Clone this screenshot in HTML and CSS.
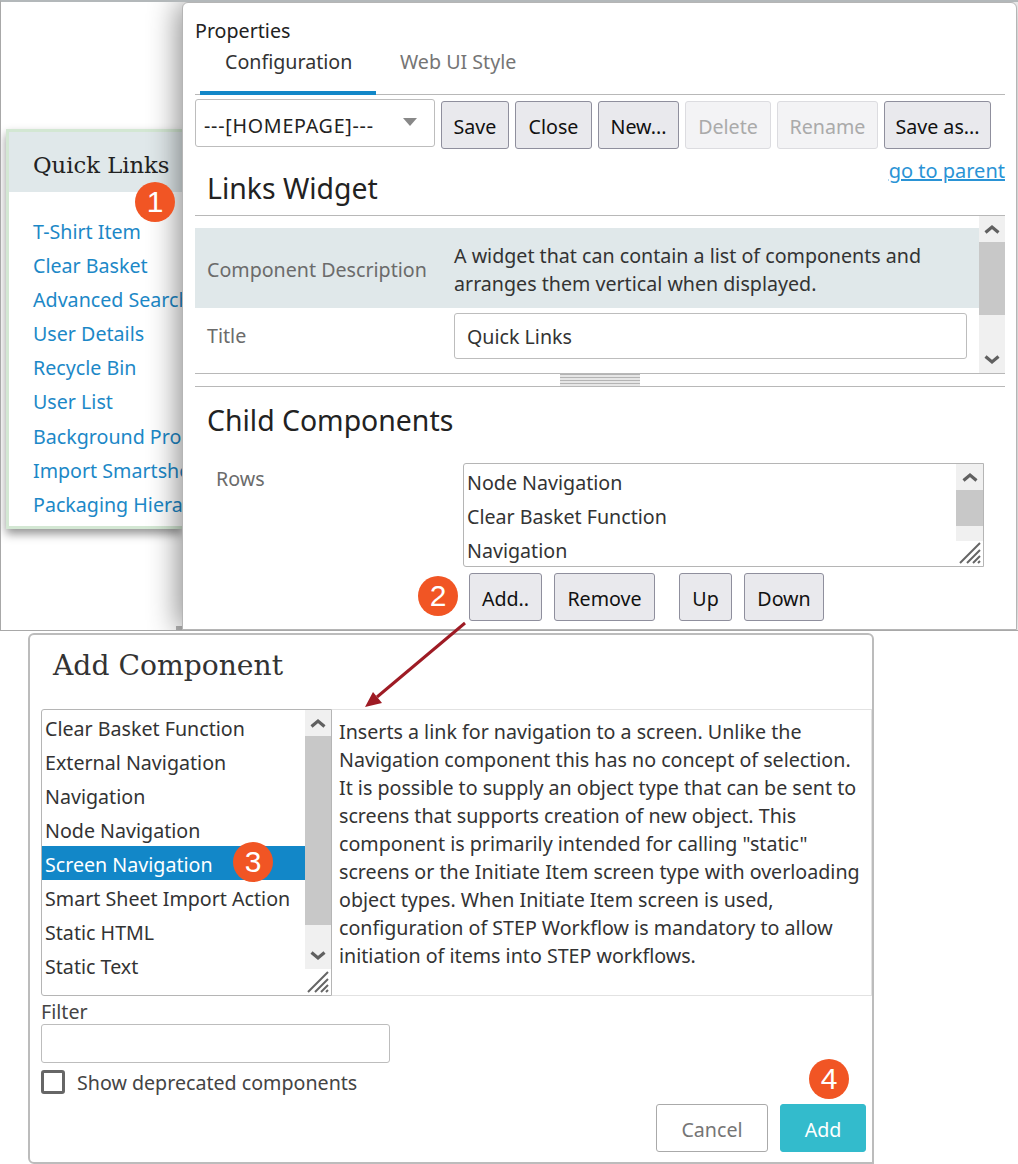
FILE: index.html
```html
<!DOCTYPE html>
<html lang="en">
<head>
<meta charset="utf-8">
<title>Add Component</title>
<link rel="stylesheet" href="styles.css">
</head>
<body>
<div class="canvas">
  <div class="top-pane">
    <section class="quick-card">
      <h2 class="quick-title">Quick Links</h2>
      <ul class="quick-list">
        <li>T-Shirt Item</li>
        <li>Clear Basket</li>
        <li>Advanced Search</li>
        <li>User Details</li>
        <li>Recycle Bin</li>
        <li>User List</li>
        <li>Background Processes</li>
        <li>Import Smartsheet</li>
        <li>Packaging Hierarchy</li>
      </ul>
    </section>

    <div class="corner-chip"></div>

    <section class="props">
      <div class="props-title">Properties</div>
      <div class="tabs">
        <div class="tab tab-active">Configuration</div>
        <div class="tab">Web UI Style</div>
      </div>
      <div class="toolbar">
        <div class="select">
          <span class="select-text">---[HOMEPAGE]---</span>
          <svg class="caret" width="14" height="8" viewBox="0 0 14 8"><path d="M0 0h14L7 8z" fill="#888"/></svg>
        </div>
        <button class="btn w-save">Save</button>
        <button class="btn w-close">Close</button>
        <button class="btn w-new">New...</button>
        <button class="btn w-delete" disabled>Delete</button>
        <button class="btn w-rename" disabled>Rename</button>
        <button class="btn w-saveas">Save as...</button>
      </div>
      <div class="parent-row"><a class="parent-link">go to parent</a></div>
      <h1 class="sec-head widget-head">Links Widget</h1>
      <div class="upper">
        <div class="upper-body">
          <div class="desc-row">
            <div class="prop-label label-desc">Component Description</div>
            <div class="prop-value">A widget that can contain a list of components and arranges them vertical when displayed.</div>
          </div>
          <div class="title-row">
            <div class="prop-label label-title">Title</div>
            <div class="title-input">Quick Links</div>
          </div>
        </div>
        <div class="scrollbar sb-upper">
          <div class="sb-btn"><svg width="18" height="12" viewBox="0 0 18 12"><path d="M2.5 9.5L9 4l6.500 5.500" fill="none" stroke="#606060" stroke-width="3.2"/></svg></div>
          <div class="sb-thumb thumb-upper"></div>
          <div class="sb-track"></div>
          <div class="sb-btn"><svg width="18" height="12" viewBox="0 0 18 12"><path d="M2.5 2.500L9 8l6.500-5.500" fill="none" stroke="#606060" stroke-width="3.2"/></svg></div>
        </div>
      </div>
      <div class="splitter"><div class="grip"></div></div>
      <h1 class="sec-head child-head">Child Components</h1>
      <div class="rows-row">
        <div class="rows-label">Rows</div>
        <div class="rows-box">
          <ul class="rows-list">
            <li>Node Navigation</li>
            <li>Clear Basket Function</li>
            <li>Navigation</li>
          </ul>
          <div class="scrollbar sb-rows">
            <div class="sb-btn"><svg width="18" height="12" viewBox="0 0 18 12"><path d="M2.5 9.5L9 4l6.500 5.500" fill="none" stroke="#606060" stroke-width="3.2"/></svg></div>
            <div class="sb-thumb thumb-rows"></div>
            <div class="sb-track"></div>
          </div>
          <svg class="grip-corner" width="24" height="24" viewBox="0 0 24 24"><path d="M2 22L22 2M9 22L22 9M15 22l7-7M20 22l2-2" stroke="#666" stroke-width="2" fill="none"/></svg>
        </div>
      </div>
      <div class="rows-actions">
        <button class="btn w-add">Add..</button>
        <button class="btn w-remove">Remove</button>
        <button class="btn w-up">Up</button>
        <button class="btn w-down">Down</button>
      </div>
    </section>
  </div>

  <section class="dialog">
    <h1 class="dialog-title">Add Component</h1>
    <div class="dialog-main">
      <div class="comp-box">
        <ul class="comp-list">
          <li>Clear Basket Function</li>
          <li>External Navigation</li>
          <li>Navigation</li>
          <li>Node Navigation</li>
          <li class="selected">Screen Navigation</li>
          <li>Smart Sheet Import Action</li>
          <li>Static HTML</li>
          <li>Static Text</li>
        </ul>
        <div class="scrollbar sb-comp">
          <div class="sb-btn"><svg width="18" height="12" viewBox="0 0 18 12"><path d="M2.5 9.5L9 4l6.500 5.500" fill="none" stroke="#606060" stroke-width="3.2"/></svg></div>
          <div class="sb-thumb thumb-comp"></div>
          <div class="sb-track"></div>
          <div class="sb-btn"><svg width="18" height="12" viewBox="0 0 18 12"><path d="M2.5 2.500L9 8l6.500-5.500" fill="none" stroke="#606060" stroke-width="3.2"/></svg></div>
        </div>
        <svg class="grip-corner" width="24" height="24" viewBox="0 0 24 24"><path d="M2 22L22 2M9 22L22 9M15 22l7-7M20 22l2-2" stroke="#666" stroke-width="2" fill="none"/></svg>
      </div>
      <div class="comp-desc">Inserts a link for navigation to a screen. Unlike the Navigation component this has no concept of selection. It is possible to supply an object type that can be sent to screens that supports creation of new object. This component is primarily intended for calling "static" screens or the Initiate Item screen type with overloading object types. When Initiate Item screen is used, configuration of STEP Workflow is mandatory to allow initiation of items into STEP workflows.</div>
    </div>
    <label class="filter-label">Filter</label>
    <div class="filter-input"></div>
    <div class="check-row">
      <span class="checkbox"></span>
      <span class="check-text">Show deprecated components</span>
    </div>
    <div class="dialog-actions">
      <button class="act act-cancel">Cancel</button>
      <button class="act act-add">Add</button>
    </div>
  </section>

  <svg class="arrow" width="120" height="100" viewBox="0 0 120 100">
    <path d="M102 2L14 76" stroke="#9e1b24" stroke-width="3" fill="none"/>
    <path d="M2 86l8-15 9 11z" fill="#9e1b24"/>
  </svg>

  <div class="badge b1">1</div>
  <div class="badge b2">2</div>
  <div class="badge b3">3</div>
  <div class="badge b4">4</div>
</div>
</body>
</html>
```

FILE: styles.css
```css
* { box-sizing: border-box; }
html, body { margin: 0; padding: 0; background: #fff; }
body { font-family: "Noto Sans", "Open Sans", sans-serif; font-size: 19.65px; color: #222; overflow: hidden; }
ul { list-style: none; margin: 0; padding: 0; }
h1, h2 { margin: 0; font-weight: 400; }

.canvas { position: relative; width: 1018px; height: 1164px; overflow: hidden; background: #fff; }

.top-pane { position: absolute; left: 0; top: 0; width: 1018px; height: 631px; border-top: 2px solid #b3b8ba; border-left: 1px solid #a8a8a8; border-bottom: 1px solid #a8a8a8; overflow: hidden; }

.quick-card { position: absolute; left: 5px; top: 127px; width: 176px; height: 400px; background: #fff; border: 3px solid #d3e7d3; border-right: 0; box-shadow: 0 5px 9px rgba(0,0,0,.42); }
.quick-title { font-family: "DejaVu Serif", serif; font-size: 22.7px; line-height: 67px; height: 60px; padding-left: 24px; background: #e0e8ea; color: #222; white-space: nowrap; }
.quick-list { padding: 23px 0 0 24px; color: #1c88c7; line-height: 34.1px; white-space: nowrap; overflow: hidden; }

.corner-chip { position: absolute; left: 175px; top: 624px; width: 8px; height: 5px; background: #b5b5b5; }

.props { position: absolute; left: 181px; top: 0; width: 835px; height: 628px; background: #fff; border: 1px solid #b5b5b5; border-radius: 6px 6px 0 0; padding: 14px 11px 0 12px; display: flex; flex-direction: column; box-shadow: -4px 0 30px rgba(0,0,0,.45); }
.props-title { line-height: 28px; height: 28px; }
.tabs { display: flex; height: 50px; border-bottom: 1px solid #b8b8b8; }
.tab { width: 176px; padding-left: 25px; line-height: 34px; color: #757575; height: 50px; }
.tab + .tab { padding-left: 24px; }
.tab-active { margin-left: 5px; color: #333; border-bottom: 4px solid #1287c8; }

.toolbar { display: flex; align-items: flex-start; gap: 6px; margin-top: 4px; height: 50px; }
.select { width: 240px; height: 48px; border: 1px solid #bdbdbd; border-radius: 3px; display: flex; align-items: center; justify-content: space-between; padding: 4px 17px 0 8px; }
.select-text { letter-spacing: .75px; }
.caret { margin-top: -6px; }
.btn { font: inherit; height: 48px; padding: 2px 0 0; margin: 2px 0 0; text-align: center; background: #e9e9ed; border: 1px solid #8f8f9d; border-radius: 3px; color: #111; }
.btn[disabled] { background: #f3f3f5; border-color: #dcdce0; color: #aaa; }
.w-save { width: 68px; } .w-close { width: 77px; } .w-new { width: 81px; } .w-delete { width: 86px; } .w-rename { width: 101px; } .w-saveas { width: 107px; }

.parent-row { display: flex; justify-content: flex-end; height: 23px; line-height: 44px; font-size: 20px; }
.parent-link { color: #2a93d5; text-decoration: underline; }

.sec-head { font-size: 28.4px; color: #222; padding-left: 12px; white-space: nowrap; }
.widget-head { line-height: 32px; height: 44px; border-bottom: 1px solid #b8b8b8; }

.upper { display: flex; height: 158px; border-bottom: 1px solid #b8b8b8; }
.upper-body { flex: 1; min-width: 0; padding-top: 12px; }
.desc-row { display: flex; height: 80px; background: #e0e8ea; align-items: center; }
.prop-label { width: 259px; padding-left: 12px; color: #6b6b6b; flex: none; }
.label-desc { padding-top: 2px; }
.label-title { padding-bottom: 2px; }
.prop-value { flex: 1; line-height: 28px; padding: 4px 30px 0 0; color: #333; }
.title-row { display: flex; align-items: center; padding-top: 5px; }
.title-input { width: 513px; height: 46px; border: 1px solid #bdbdbd; border-radius: 3px; line-height: 46px; padding-left: 12px; color: #333; }

.scrollbar { display: flex; flex-direction: column; background: #f0f0f0; flex: none; }
.sb-btn { height: 26px; display: flex; align-items: center; justify-content: center; flex: none; }
.sb-thumb { background: #c8c8c8; flex: none; }
.sb-track { flex: 1; }
.sb-upper { width: 26px; }
.thumb-upper { height: 73px; }

.splitter { height: 13px; border-bottom: 1px solid #b8b8b8; display: flex; justify-content: center; }
.grip { width: 80px; height: 12px; background: repeating-linear-gradient(#b4b4b4 0 1px, #e6e6e6 1px 3px); }

.child-head { line-height: 40px; margin-top: 13px; height: 42px; }

.rows-row { display: flex; margin-top: 21px; height: 104px; }
.rows-label { width: 268px; padding-left: 21px; color: #6b6b6b; line-height: 32px; }
.rows-box { position: relative; display: flex; width: 521px; height: 104px; border: 1px solid #b5b5b5; border-radius: 3px 0 0 3px; overflow: hidden; }
.rows-list { flex: 1; padding: 2px 0 0 3px; line-height: 34px; color: #333; }
.sb-rows { width: 27px; height: 77px; }
.thumb-rows { height: 36px; }
.grip-corner { position: absolute; right: 1px; bottom: 1px; }

.rows-actions { display: flex; margin-top: 4px; padding-left: 274px; }
.rows-actions .btn { margin: 2px 12px 0 0; }
.w-add { width: 73px; } .w-remove { width: 101px; } .w-up { width: 53px; } .w-down { width: 80px; }
.rows-actions .w-remove { margin-right: 24px; }

.dialog { position: absolute; left: 28px; top: 633px; width: 846px; height: 531px; background: #fff; border: 2px solid #bcbcbc; border-radius: 6px 6px 0 6px; padding: 0 0 0 11px; display: flex; flex-direction: column; }
.dialog-title { font-family: "DejaVu Serif", serif; font-size: 28.2px; line-height: 62px; height: 74px; padding-left: 12px; color: #333; }
.dialog-main { display: flex; height: 287px; }
.comp-box { position: relative; display: flex; width: 291px; height: 287px; border: 1px solid #b5b5b5; border-radius: 3px 0 0 3px; overflow: hidden; }
.comp-list { flex: 1; min-width: 0; white-space: nowrap; color: #333; }
.comp-list li { height: 34px; line-height: 38px; padding-left: 3px; }
.comp-list .selected { background: #1287c8; color: #fff; }
.sb-comp { width: 26px; height: 259px; }
.thumb-comp { height: 189px; }
.comp-desc { width: 540px; height: 287px; border: 1px solid #e2e2e2; border-left: 0; padding: 8px 6px 0 7px; line-height: 28px; color: #333; }

.filter-label { line-height: 28px; height: 28px; margin-top: 2px; color: #444; }
.filter-input { width: 349px; height: 39px; border: 1px solid #bdbdbd; border-radius: 3px; margin-top: -2px; }
.check-row { display: flex; align-items: center; gap: 12px; margin-top: 7px; height: 24px; }
.checkbox { width: 24px; height: 24px; border: 3px solid #666; border-radius: 3px; flex: none; }
.check-text { color: #444; }
.dialog-actions { display: flex; justify-content: flex-end; gap: 12px; margin-top: 10px; padding-right: 6px; }
.act { font: inherit; height: 48px; border-radius: 3px; padding: 2px 0 0; }
.act-cancel { width: 112px; background: #fff; border: 1px solid #aaa; color: #757575; }
.act-add { width: 86px; background: #33bbcc; border: 1px solid #33bbcc; color: #fff; }

.arrow { position: absolute; left: 363px; top: 621px; }

.badge { position: absolute; width: 40px; height: 40px; border-radius: 50%; background: #f15524; color: #fff; font-family: "Liberation Sans", sans-serif; font-size: 30px; line-height: 40px; text-align: center; }
.b1 { left: 135px; top: 182px; }
.b2 { left: 418px; top: 576px; }
.b3 { left: 233px; top: 842px; }
.b4 { left: 809px; top: 1059px; }
```
